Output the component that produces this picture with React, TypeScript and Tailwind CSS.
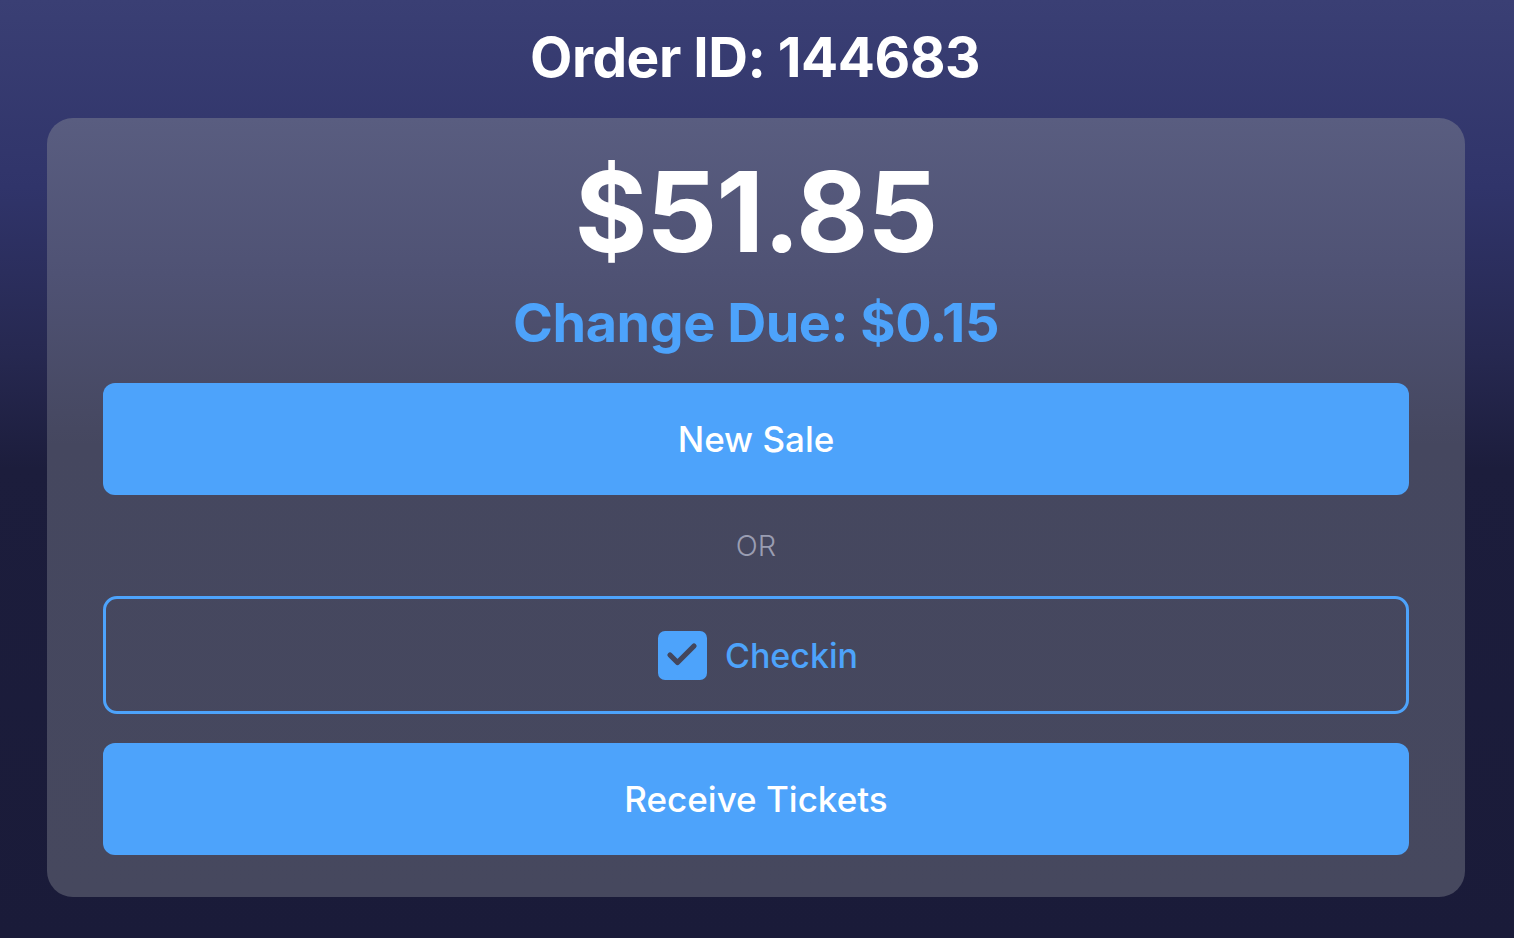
import { Check } from 'lucide-react'

export default function App() {
    return (
        <div
            className="w-[1514px] h-[938px] flex flex-col items-center bg-[linear-gradient(180deg,#3a3f74_0%,#30346a_20%,#262850_38%,#1c1d3c_50%,#1a1b39_100%)]"
            style={{ fontFamily: 'Inter, "Noto Sans", sans-serif' }}
        >
            <h1 className="mt-[22px] mr-[4px] h-[70px] flex items-center text-[55px] font-bold text-white tracking-[-0.5px]">
                Order ID: 144683
            </h1>

            <div className="mt-[26px] mr-[2px] w-[1418px] h-[779px] rounded-[26px] px-[56px] flex flex-col items-center bg-[linear-gradient(180deg,#595d80_0%,#4f5274_20%,#45475f_42%,#46485e_100%)]">
                <div className="mt-[36px] h-[116px] flex items-center text-[111px] font-bold text-white tracking-[-1px]">
                    $51.85
                </div>
                <div className="mt-[20px] h-[64px] flex items-center text-[54px] font-bold text-[#4da3fb] tracking-[-0.5px]">
                    Change Due: $0.15
                </div>

                <button className="mt-[29px] w-full h-[112px] rounded-[12px] bg-[#4da3fb] text-white text-[35px] font-medium">
                    New Sale
                </button>

                <div className="h-[101px] flex items-center text-[29px] font-light text-[#9a9db2]">
                    OR
                </div>

                <button className="w-full h-[118px] rounded-[14px] border-[3px] border-[#4da3fb] flex items-center justify-center gap-[18px] pl-[4px]">
                    <span className="w-[49px] h-[49px] rounded-[7px] bg-[#4da3fb] flex items-center justify-center">
                        <Check className="w-[36px] h-[36px] text-[#43465c]" strokeWidth={3.5} />
                    </span>
                    <span className="text-[34px] font-medium text-[#4da3fb]">Checkin</span>
                </button>

                <button className="mt-[29px] w-full h-[112px] rounded-[12px] bg-[#4da3fb] text-white text-[35px] font-medium">
                    Receive Tickets
                </button>
            </div>
        </div>
    )
}
